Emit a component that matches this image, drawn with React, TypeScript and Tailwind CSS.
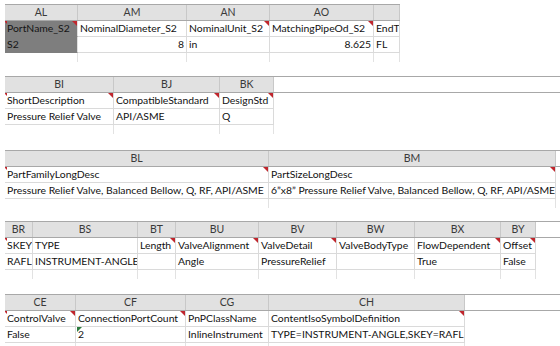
import React from "react";

type Col = { label: string; w: string; note?: boolean };
type Cell = { text: string; right?: boolean; green?: boolean; dark?: boolean };

const RedMark = () => (
  <span className="absolute right-0 top-0 h-0 w-0 border-l-[5px] border-t-[5px] border-l-transparent border-t-[#c0262d]" />
);

const EdgeMark = () => (
  <span className="absolute left-[-1px] top-0 h-0 w-0 border-l-[3px] border-t-[3px] border-l-transparent border-t-[#c0262d]" />
);

const GreenMark = () => (
  <span className="absolute left-[1px] top-0 h-0 w-0 border-r-[5px] border-t-[5px] border-r-transparent border-t-[#2b7a3d]" />
);

const Sheet = ({
  cols,
  rows,
  edge,
  className,
}: {
  cols: Col[];
  rows: Cell[][];
  edge?: boolean;
  className?: string;
}) => {
  return (
    <div className={`ml-[5px] flex flex-col overflow-hidden ${className ?? ""}`}>
      {/* Column letters */}
      <div className="flex border-t border-b border-[#a8a8a8]">
        {cols.map((c, i) => (
          <div
            key={i}
            className={`${c.w} h-[15px] shrink-0 border-r border-[#c8c8c8] bg-[#e1e1e1] text-center text-[10.5px] leading-[15px] text-[#3a3a3a]`}
          >
            {c.label}
          </div>
        ))}
      </div>

      {rows.map((row, r) => (
        <div key={r} className="flex">
          {cols.map((c, i) => {
            const cell = row[i];
            return (
              <div
                key={i}
                className={`relative ${c.w} h-[16px] shrink-0 overflow-hidden whitespace-nowrap border-r border-b px-[2px] text-[10.4px] leading-[15px] ${
                  cell.dark
                    ? "border-[#7e7e7e] border-r-[#e0e0e0] bg-[#7e7e7e] text-[#151515]"
                    : "border-[#dadada] bg-white text-[#111]"
                } ${cell.right ? "text-right" : "text-left"}`}
              >
                {r === 0 && edge && i === 0 && <EdgeMark />}
                {r === 0 && c.note && <RedMark />}
                {cell.green && <GreenMark />}
                {cell.text}
              </div>
            );
          })}
        </div>
      ))}

      {/* partly visible next row */}
      <div className="flex">
        {cols.map((c, i) => (
          <div key={i} className={`${c.w} h-[9px] shrink-0 border-r border-[#e2e2e2]`} />
        ))}
      </div>
    </div>
  );
};

const t = (text: string, extra: Partial<Cell> = {}): Cell => ({ text, ...extra });

export default function App() {
  return (
    <div className="h-[346px] w-[560px] overflow-hidden bg-white pt-[4px] [font-family:Lato,'Liberation_Sans',sans-serif]">
      <Sheet
        edge
        className="w-[395px]"
        cols={[
          { label: "AL", w: "w-[73px]", note: true },
          { label: "AM", w: "w-[109px]" },
          { label: "AN", w: "w-[83px]", note: true },
          { label: "AO", w: "w-[104px]", note: true },
          { label: "", w: "w-[26px]" },
        ]}
        rows={[
          [
            t("PortName_S2", { dark: true }),
            t("NominalDiameter_S2"),
            t("NominalUnit_S2"),
            t("MatchingPipeOd_S2"),
            t("EndT"),
          ],
          [t("S2", { dark: true }), t("8", { right: true }), t("in"), t("8.625", { right: true }), t("FL")],
        ]}
      />

      <Sheet
        edge
        className="mt-[14px]"
        cols={[
          { label: "BI", w: "w-[109px]", note: true },
          { label: "BJ", w: "w-[106px]", note: true },
          { label: "BK", w: "w-[54px]", note: true },
        ]}
        rows={[
          [t("ShortDescription"), t("CompatibleStandard"), t("DesignStd")],
          [t("Pressure Relief Valve"), t("API/ASME"), t("Q")],
        ]}
      />

      <Sheet
        edge
        className="mt-[16px]"
        cols={[
          { label: "BL", w: "w-[264px]", note: true },
          { label: "BM", w: "w-[287px]", note: true },
        ]}
        rows={[
          [t("PartFamilyLongDesc"), t("PartSizeLongDesc")],
          [
            t("Pressure Relief Valve, Balanced Bellow, Q, RF, API/ASME"),
            t("6\u201dx8\u201d Pressure Relief Valve, Balanced Bellow, Q, RF, API/ASME"),
          ],
        ]}
      />

      <Sheet
        edge
        className="mt-[13px]"
        cols={[
          { label: "BR", w: "w-[28px]" },
          { label: "BS", w: "w-[105px]" },
          { label: "BT", w: "w-[38px]", note: true },
          { label: "BU", w: "w-[83px]", note: true },
          { label: "BV", w: "w-[78px]", note: true },
          { label: "BW", w: "w-[78px]" },
          { label: "BX", w: "w-[86px]", note: true },
          { label: "BY", w: "w-[35px]", note: true },
        ]}
        rows={[
          [
            t("SKEY"),
            t("TYPE"),
            t("Length"),
            t("ValveAlignment"),
            t("ValveDetail"),
            t("ValveBodyType"),
            t("FlowDependent"),
            t("Offset"),
          ],
          [t("RAFL"), t("INSTRUMENT-ANGLE"), t(""), t("Angle"), t("PressureRelief"), t(""), t("True"), t("False")],
        ]}
      />

      <Sheet
        edge
        className="mt-[15px]"
        cols={[
          { label: "CE", w: "w-[71px]", note: true },
          { label: "CF", w: "w-[110px]", note: true },
          { label: "CG", w: "w-[83px]" },
          { label: "CH", w: "w-[196px]", note: true },
        ]}
        rows={[
          [t("ControlValve"), t("ConnectionPortCount"), t("PnPClassName"), t("ContentIsoSymbolDefinition")],
          [t("False"), t("2", { green: true }), t("InlineInstrument"), t("TYPE=INSTRUMENT-ANGLE,SKEY=RAFL")],
        ]}
      />
    </div>
  );
}
